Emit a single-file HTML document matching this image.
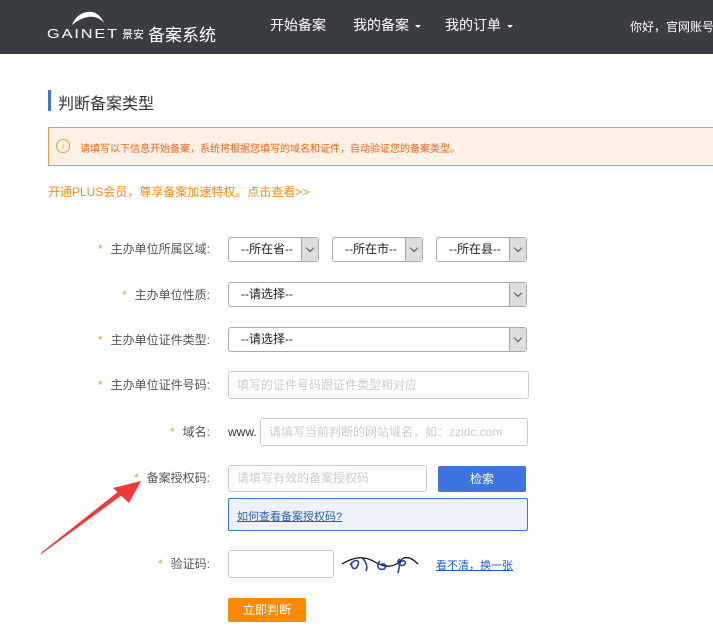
<!DOCTYPE html>
<html><head><meta charset="utf-8"><style>
*{margin:0;padding:0;box-sizing:border-box}
body{width:713px;height:630px;overflow:hidden;background:#fff;position:relative;font-family:"Liberation Sans","Noto Sans CJK SC",sans-serif;color:#333}
.a{position:absolute;white-space:nowrap}
.hdr{position:absolute;left:0;top:0;width:713px;height:54px;background:#393d42}
.nav{color:#fff;font-size:14px;top:15px}
.car{display:inline-block;width:0;height:0;border-left:3px solid transparent;border-right:3px solid transparent;border-top:3px solid #fff;vertical-align:middle;margin-left:6px}
.lbl{font-size:12px;color:#555;text-align:right;width:200px;left:10px;line-height:14px}
.lbl b{color:#f39a3d;font-weight:normal;margin-right:8px}
.sel{position:absolute;height:25px;border:1px solid #aaa;border-radius:3px;background:#fff;font-size:12px;color:#222;padding:0 0 0 12px;line-height:23px}
.sel i{position:absolute;right:0;top:0;width:17px;height:23px;background:#ddd;border-left:1px solid #aaa}
.sel i:after{content:"";position:absolute;left:5px;top:7px;width:5px;height:5px;border-right:1px solid #555;border-bottom:1px solid #555;transform:rotate(45deg)}
.inp{position:absolute;border:1px solid #ccc;border-radius:3px;background:#fff;font-size:12px;color:#ccc;padding:0 0 0 8px}
</style></head><body>
<div class="hdr"></div>
<svg class="a" style="left:46px;top:8px" width="102" height="32" viewBox="0 0 102 32">
<path d="M26 17 C30 7 38 3 46 4 C52 5 56 10 58 15 C54 10 48 8 42 9 C36 10 31 13 26 17Z" fill="#fff"/>
<text x="1" y="30" fill="#fff" font-size="13" font-family="Liberation Sans" letter-spacing="1.5" textLength="72" lengthAdjust="spacingAndGlyphs">GAINET</text>
<text x="76" y="30" fill="#fff" font-size="11" font-family="Noto Sans CJK SC">景安</text>
</svg>
<div class="a" style="left:148px;top:21px;color:#fff;font-size:17px">备案系统</div>
<div class="a nav" style="left:270px">开始备案</div>
<div class="a nav" style="left:353px">我的备案<span class="car"></span></div>
<div class="a nav" style="left:445px">我的订单<span class="car"></span></div>
<div class="a nav" style="left:630px;font-size:12px;top:18px">你好，官网账号：</div>

<div class="a" style="left:48px;top:90px;width:3px;height:21px;background:#3d74e0"></div>
<div class="a" style="left:58px;top:90px;font-size:16px;color:#333">判断备案类型</div>
<div class="a" style="left:48px;top:127px;width:680px;height:39px;background:#fff1e6;border:1px solid #f39a3d"></div>
<div class="a" style="left:56px;top:139px;width:14px;height:14px;border:1px solid #f39a3d;border-radius:50%;color:#f39a3d;font-size:9px;text-align:center;line-height:12px">i</div>
<div class="a" style="left:80px;top:140px;font-size:10px;color:#e8641c">请填写以下信息开始备案，系统将根据您填写的域名和证件，自动验证您的备案类型。</div>
<div class="a" style="left:48px;top:183px;font-size:12px;color:#f38a1c">开通PLUS会员，尊享备案加速特权。点击查看&gt;&gt;</div>

<div class="a lbl" style="top:242px"><b>*</b>主办单位所属区域:</div>
<div class="sel" style="left:228px;top:237px;width:91px">--所在省--<i></i></div>
<div class="sel" style="left:332px;top:237px;width:91px">--所在市--<i></i></div>
<div class="sel" style="left:436px;top:237px;width:91px">--所在县--<i></i></div>

<div class="a lbl" style="top:288px"><b>*</b>主办单位性质:</div>
<div class="sel" style="left:228px;top:282px;width:299px">--请选择--<i></i></div>
<div class="a lbl" style="top:333px"><b>*</b>主办单位证件类型:</div>
<div class="sel" style="left:228px;top:327px;width:299px">--请选择--<i></i></div>

<div class="a lbl" style="top:378px"><b>*</b>主办单位证件号码:</div>
<div class="inp" style="left:228px;top:371px;width:301px;height:28px;line-height:26px">填写的证件号码跟证件类型相对应</div>

<div class="a lbl" style="top:425px"><b>*</b>域名:</div>
<div class="a" style="left:228px;top:425px;font-size:12px;color:#333">www.</div>
<div class="inp" style="left:260px;top:418px;width:268px;height:28px;line-height:26px">请填写当前判断的网站域名，如：zzidc.com</div>

<div class="a lbl" style="top:471px"><b>*</b>备案授权码:</div>
<div class="inp" style="left:228px;top:465px;width:199px;height:27px;line-height:25px">请填写有效的备案授权码</div>
<div class="a" style="left:438px;top:466px;width:88px;height:26px;background:#3d74e0;border-radius:2px;color:#fff;font-size:12px;text-align:center;line-height:26px">检索</div>
<div class="a" style="left:228px;top:498px;width:300px;height:33px;background:#eef2fb;border:1px solid #3d74e0;border-radius:2px"></div>
<div class="a" style="left:237px;top:508px;font-size:11px;color:#2a5db0;text-decoration:underline">如何查看备案授权码?</div>

<div class="a lbl" style="top:557px"><b>*</b>验证码:</div>
<div class="inp" style="left:228px;top:550px;width:106px;height:28px"></div>
<svg class="a" style="left:340px;top:553px" width="80" height="22" viewBox="0 0 80 22">
<path d="M2 11 C15 3 25 3 35 9 C45 15 55 15 62 6 C68 2 75 8 78 11" stroke="#111" fill="none" stroke-width="1.3"/>
<path d="M10 12 C14 6 20 6 18 12 C16 18 10 16 12 9 M22 5 C26 8 28 14 26 18 M40 8 C36 12 38 18 44 16 C48 13 44 9 40 12 M60 6 C56 8 58 14 64 12 C68 8 62 6 60 10 L58 20" stroke="#2c3fb0" fill="none" stroke-width="1.6"/>
</svg>
<div class="a" style="left:436px;top:557px;font-size:11px;color:#1a5dc8;text-decoration:underline">看不清，换一张</div>
<div class="a" style="left:228px;top:598px;width:78px;height:24px;background:#ff8a00;border-radius:2px;color:#fff;font-size:12px;text-align:center;line-height:24px">立即判断</div>

<svg class="a" style="left:0;top:0" width="713" height="630">
<polygon points="40,555 122,495 119,491 42,552" fill="#f03a3a"/>
<polygon points="141,481 113,488 129,503" fill="#f03a3a"/>
</svg>
</body></html>
